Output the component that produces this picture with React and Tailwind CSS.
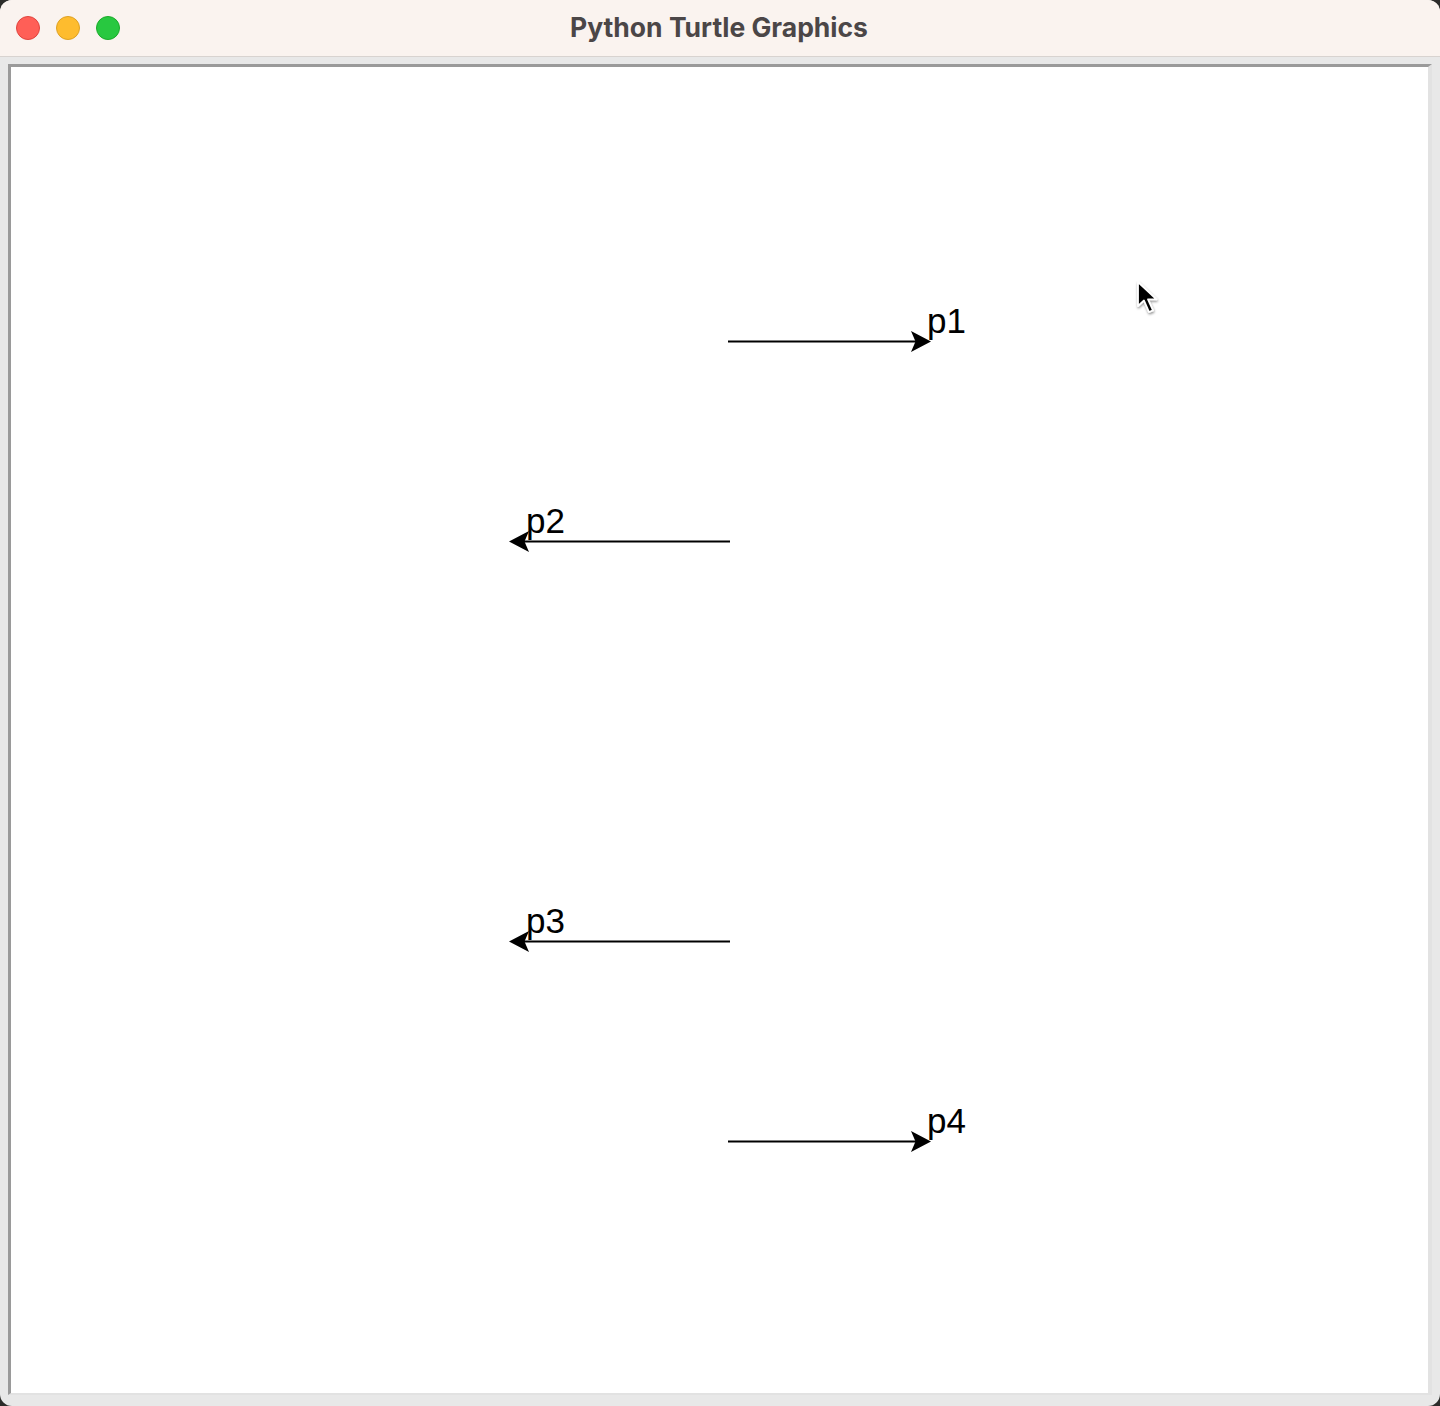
import React from "react";

const OX = 11;
const OY = 67;

function ArrowRight({ x, y }) {
  const p = `${x - OX},${y - OY} ${x - OX - 20},${y - OY - 10.5} ${x - OX - 15.5},${y - OY} ${x - OX - 20},${y - OY + 10.5}`;
  return <polygon points={p} fill="#000" />;
}

function ArrowLeft({ x, y }) {
  const p = `${x - OX},${y - OY} ${x - OX + 20},${y - OY - 10.5} ${x - OX + 15.5},${y - OY} ${x - OX + 20},${y - OY + 10.5}`;
  return <polygon points={p} fill="#000" />;
}

function Line({ x1, x2, y }) {
  return (
    <line x1={x1 - OX} x2={x2 - OX} y1={y - OY} y2={y - OY} stroke="#000" strokeWidth="2" />
  );
}

const labels = [
  { t: "p1", x: 927, y: 303 },
  { t: "p2", x: 526, y: 503 },
  { t: "p3", x: 526, y: 903 },
  { t: "p4", x: 927, y: 1103 },
];

export default function App() {
  return (
    <div className="w-[1440px] h-[1406px] bg-[#2c2c2a]">
      <div className="w-[1440px] h-[1406px] rounded-[12px] overflow-hidden flex flex-col bg-[#e8e8e8]">
        <div className="relative h-[57px] shrink-0 bg-[#faf3ef] border-b border-[#d8d3d0] flex items-center justify-center">
          <div className="absolute left-[16px] top-[16px] flex gap-[16px]">
            <div className="w-[24px] h-[24px] rounded-full bg-[#ff5f57] border border-[#e0443e]" />
            <div className="w-[24px] h-[24px] rounded-full bg-[#febc2e] border border-[#dea123]" />
            <div className="w-[24px] h-[24px] rounded-full bg-[#28c840] border border-[#1aab29]" />
          </div>
          <div
            className="text-[26.5px] font-bold leading-none text-[#4b4647] pb-[1px] pr-[2px]"
            style={{ fontFamily: "Inter, 'Liberation Sans', sans-serif" }}
          >
            Python Turtle Graphics
          </div>
        </div>
        <div className="flex-1 pt-[7px] pl-[8px] pr-[8px] pb-[11px]">
          <div className="relative w-full h-full bg-white border-t-[3px] border-l-[3px] border-r-[4px] border-b-[2px] border-t-[#9a9a9a] border-l-[#9a9a9a] border-r-[#e2e2e2] border-b-[#e2e2e2]">
            <svg className="absolute inset-0 w-full h-full" xmlns="http://www.w3.org/2000/svg">
              <Line x1={728} x2={916} y={341.5} />
              <ArrowRight x={931} y={341.5} />
              <Line x1={524} x2={730} y={541.5} />
              <ArrowLeft x={509} y={541.5} />
              <Line x1={524} x2={730} y={941.5} />
              <ArrowLeft x={509} y={941.5} />
              <Line x1={728} x2={916} y={1141.5} />
              <ArrowRight x={931} y={1141.5} />
            </svg>
            {labels.map((l) => (
              <span
                key={l.t}
                className="absolute text-[35px] leading-[35px] text-black whitespace-nowrap"
                style={{
                  left: l.x - OX,
                  top: l.y - OY,
                  fontFamily: "'Liberation Sans', Arial, sans-serif",
                }}
              >
                {l.t}
              </span>
            ))}
            <svg
              className="absolute w-[30px] h-[42px]"
              style={{ left: 1135 - OX, top: 279 - OY }}
              viewBox="0 0 30 42"
              xmlns="http://www.w3.org/2000/svg"
            >
              <defs>
                <filter id="sh" x="-50%" y="-50%" width="200%" height="200%">
                  <feDropShadow dx="0.5" dy="1.5" stdDeviation="1.2" floodColor="#000" floodOpacity="0.45" />
                </filter>
              </defs>
              <path
                d="M3 3 L3 27 L9 21.5 L14 33 L18 31.3 L13 20.3 L21.5 20.3 Z"
                fill="#000"
                stroke="#fff"
                strokeWidth="1.8"
                strokeLinejoin="round"
                filter="url(#sh)"
              />
            </svg>
          </div>
        </div>
      </div>
    </div>
  );
}
